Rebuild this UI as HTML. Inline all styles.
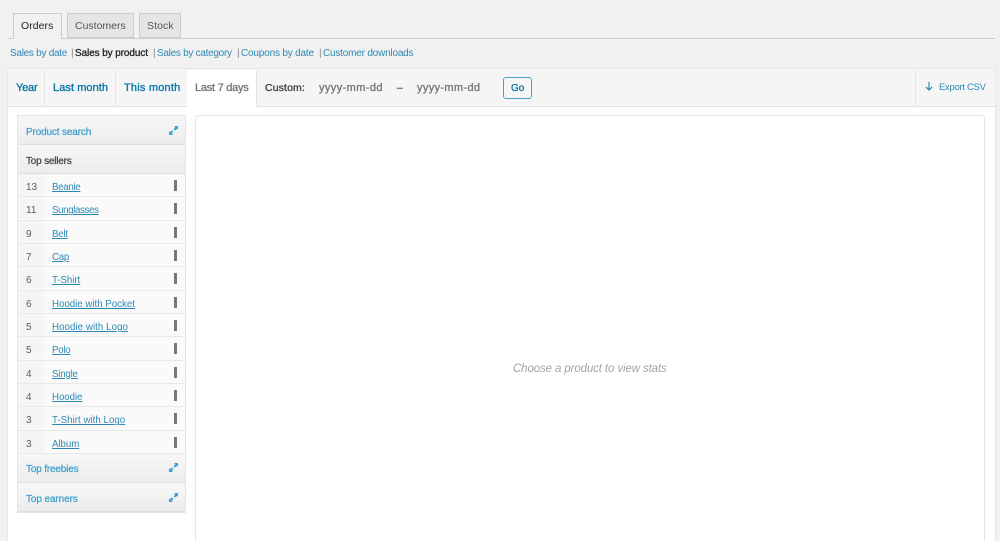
<!DOCTYPE html>
<html><head><meta charset="utf-8">
<style>
html,body{margin:0;padding:0;width:1000px;height:541px;overflow:hidden;background:#f1f1f1}
body{font-family:"Liberation Sans",sans-serif;position:relative;color:#444}
#w{position:absolute;left:0;top:0;width:1000px;height:541px;overflow:hidden;filter:blur(.3px)}
.a{position:absolute}
.t{position:absolute;white-space:nowrap;line-height:14px;font-size:10px}
.l{color:#2e88b4}
.b{-webkit-text-stroke:.3px currentColor}
.tab{position:absolute;top:13px;height:25px;box-sizing:border-box;border:1px solid #ccc;background:#e5e5e5}
.row{position:absolute;left:18px;width:167px;height:23.3px;box-sizing:border-box;background:#fafafa;border-bottom:1px solid #e8e8e8}
.row i{position:absolute;left:0;top:0;width:26px;height:22px;background:#f5f5f5}
.row b{position:absolute;left:156px;top:6px;width:3px;height:11px;background:#777}
.row span{position:absolute;left:8px;top:7px;font-size:10px;line-height:14px;color:#5a5a5a}
.row u{position:absolute;left:34px;top:7px;font-size:9.7px;line-height:14px;color:#2e88b4;white-space:nowrap;letter-spacing:-.05px}
.hd{position:absolute;left:18px;width:167px;box-sizing:border-box;background:linear-gradient(#f7f7f7,#ececec);border-bottom:1px solid #dfdfdf}
.hd span{position:absolute;left:8px;font-size:10px;line-height:14px;color:#3f9fcf;-webkit-text-stroke:.25px currentColor}
.hd svg{position:absolute;left:151px}
</style></head><body>
<div id="w">
<div class="a" style="left:8px;top:38px;width:987px;height:1px;background:#ccc"></div>
<div class="tab" style="left:13px;width:49px;height:26px;background:#f1f1f1;border-bottom:0"></div>
<div class="tab" style="left:67px;width:67px"></div>
<div class="tab" style="left:139px;width:42px"></div>
<div class="t" style="left:21px;top:19px;font-size:10.5px;color:#222;letter-spacing:.05px">Orders</div>
<div class="t" style="left:75px;top:19px;font-size:10.5px;color:#555">Customers</div>
<div class="t" style="left:147px;top:19px;font-size:10.5px;color:#555;letter-spacing:.1px">Stock</div>

<div class="t l" style="left:10px;top:47px;letter-spacing:-.27px">Sales by date</div>
<div class="t" style="left:71px;top:47px;color:#888">|</div>
<div class="t b" style="left:75px;top:47px;color:#222;letter-spacing:-.1px">Sales by product</div>
<div class="t" style="left:153px;top:47px;color:#888">|</div>
<div class="t l" style="left:157px;top:47px;letter-spacing:-.28px">Sales by category</div>
<div class="t" style="left:237px;top:47px;color:#888">|</div>
<div class="t l" style="left:241px;top:47px;letter-spacing:-.18px">Coupons by date</div>
<div class="t" style="left:319px;top:47px;color:#888">|</div>
<div class="t l" style="left:323px;top:47px;letter-spacing:-.2px">Customer downloads</div>

<div class="a" style="left:8px;top:69px;width:987px;height:472px;background:#fff;box-shadow:0 0 0 1px #e8e8e8"></div>
<div class="a" style="left:8px;top:69px;width:987px;height:37px;background:#f5f5f5;border-bottom:1px solid #e3e3e3"></div>
<div class="a" style="left:44px;top:70px;width:1px;height:36px;background:#e5e5e5"></div>
<div class="a" style="left:115px;top:70px;width:1px;height:36px;background:#e5e5e5"></div>
<div class="a" style="left:187px;top:70px;width:70px;height:38px;background:#fff"></div>
<div class="a" style="left:256px;top:70px;width:1px;height:37px;background:#e3e3e3"></div>
<div class="a" style="left:915px;top:70px;width:1px;height:36px;background:#e5e5e5"></div>

<div class="t b" style="left:16px;top:81px;color:#0a76a8;font-size:11px;-webkit-text-stroke-width:.35px;letter-spacing:-.2px">Year</div>
<div class="t b" style="left:53px;top:81px;color:#0a76a8;font-size:11px;-webkit-text-stroke-width:.35px;letter-spacing:.07px">Last month</div>
<div class="t b" style="left:124px;top:81px;color:#0a76a8;font-size:11px;-webkit-text-stroke-width:.35px;letter-spacing:.2px">This month</div>
<div class="t b" style="left:195px;top:81px;color:#777;font-size:11px;-webkit-text-stroke-width:.35px;letter-spacing:-.25px">Last 7 days</div>
<div class="t b" style="left:265px;top:81px;color:#444;font-size:10.5px;-webkit-text-stroke-width:.35px;letter-spacing:.12px">Custom:</div>
<div class="t b" style="left:319px;top:81px;color:#777;font-size:11px;-webkit-text-stroke-width:.35px;letter-spacing:.4px">yyyy-mm-dd</div>
<div class="t b" style="left:397px;top:81px;color:#666;font-size:10.5px">–</div>
<div class="t b" style="left:417px;top:81px;color:#777;font-size:11px;-webkit-text-stroke-width:.35px;letter-spacing:.35px">yyyy-mm-dd</div>
<div class="a" style="left:503px;top:77px;width:29px;height:22px;box-sizing:border-box;border:1px solid #4a9fc4;border-radius:3px;background:#f5f5f5"></div>
<div class="t b" style="left:511px;top:82px;color:#0a76a8;font-size:10px">Go</div>
<svg class="a" style="left:924px;top:81px" width="10" height="11" viewBox="0 0 10 11"><path d="M5 1V9M2 6L5 9L8 6" fill="none" stroke="#2e88b4" stroke-width="1.2"/></svg>
<div class="t l" style="left:939px;top:81px;letter-spacing:-.3px;font-size:9.5px">Export CSV</div>

<div class="a" style="left:17px;top:115px;width:169px;height:398px;box-sizing:border-box;border:1px solid #e5e5e5;background:#f5f5f5"></div>
<div class="hd" style="top:116px;height:29px"><span style="top:9px;letter-spacing:-.15px;top:8.500px;margin-top:1px">Product search</span>
<svg style="top:10px" width="9" height="9" viewBox="0 0 9 9"><path d="M5 0H9V4L7.900 2.900L6 4.600L4.500 3.300L6.200 1.200ZM4 9H0V5L1.100 6.100L3 4.500L4.500 5.800L2.800 7.800Z" fill="#3ba5d8"/></svg></div>
<div class="hd" style="top:145px;height:29px"><span style="top:10px;color:#444;letter-spacing:-.2px">Top sellers</span></div>

<div class="row" style="top:174px"><i></i><span>13</span><u style="letter-spacing:-.3px">Beanie</u><b></b></div>
<div class="row" style="top:197.300px"><i></i><span>11</span><u style="letter-spacing:-.35px">Sunglasses</u><b></b></div>
<div class="row" style="top:220.600px"><i></i><span>9</span><u style="letter-spacing:-.25px">Belt</u><b></b></div>
<div class="row" style="top:244px"><i></i><span>7</span><u style="letter-spacing:-.25px">Cap</u><b></b></div>
<div class="row" style="top:267.300px"><i></i><span>6</span><u>T-Shirt</u><b></b></div>
<div class="row" style="top:290.600px"><i></i><span>6</span><u style="letter-spacing:0">Hoodie with Pocket</u><b></b></div>
<div class="row" style="top:314px"><i></i><span>5</span><u style="letter-spacing:.07px">Hoodie with Logo</u><b></b></div>
<div class="row" style="top:337.300px"><i></i><span>5</span><u style="letter-spacing:-.25px">Polo</u><b></b></div>
<div class="row" style="top:360.600px"><i></i><span>4</span><u style="letter-spacing:-.2px">Single</u><b></b></div>
<div class="row" style="top:384px"><i></i><span>4</span><u>Hoodie</u><b></b></div>
<div class="row" style="top:407.300px"><i></i><span>3</span><u style="letter-spacing:.03px">T-Shirt with Logo</u><b></b></div>
<div class="row" style="top:430.600px"><i></i><span>3</span><u>Album</u><b></b></div>

<div class="hd" style="top:454px;height:29px"><span style="top:9px;letter-spacing:-.17px">Top freebies</span>
<svg style="top:9px" width="9" height="9" viewBox="0 0 9 9"><path d="M5 0H9V4L7.900 2.900L6 4.600L4.500 3.300L6.200 1.200ZM4 9H0V5L1.100 6.100L3 4.500L4.500 5.800L2.800 7.800Z" fill="#3ba5d8"/></svg></div>
<div class="hd" style="top:483px;height:29px"><span style="top:9px;letter-spacing:-.1px;margin-top:1px">Top earners</span>
<svg style="top:10px" width="9" height="9" viewBox="0 0 9 9"><path d="M5 0H9V4L7.900 2.900L6 4.600L4.500 3.300L6.200 1.200ZM4 9H0V5L1.100 6.100L3 4.500L4.500 5.800L2.800 7.800Z" fill="#3ba5d8"/></svg></div>

<div class="a" style="left:195px;top:115px;width:790px;height:440px;box-sizing:border-box;border:1px solid #e5e5e5;border-radius:3px;background:#fff"></div>
<div class="t" style="left:513px;top:362px;font-size:11.5px;font-style:italic;color:#a8a3a0;letter-spacing:-.12px">Choose a product to view stats</div>
</div>
</body></html>
